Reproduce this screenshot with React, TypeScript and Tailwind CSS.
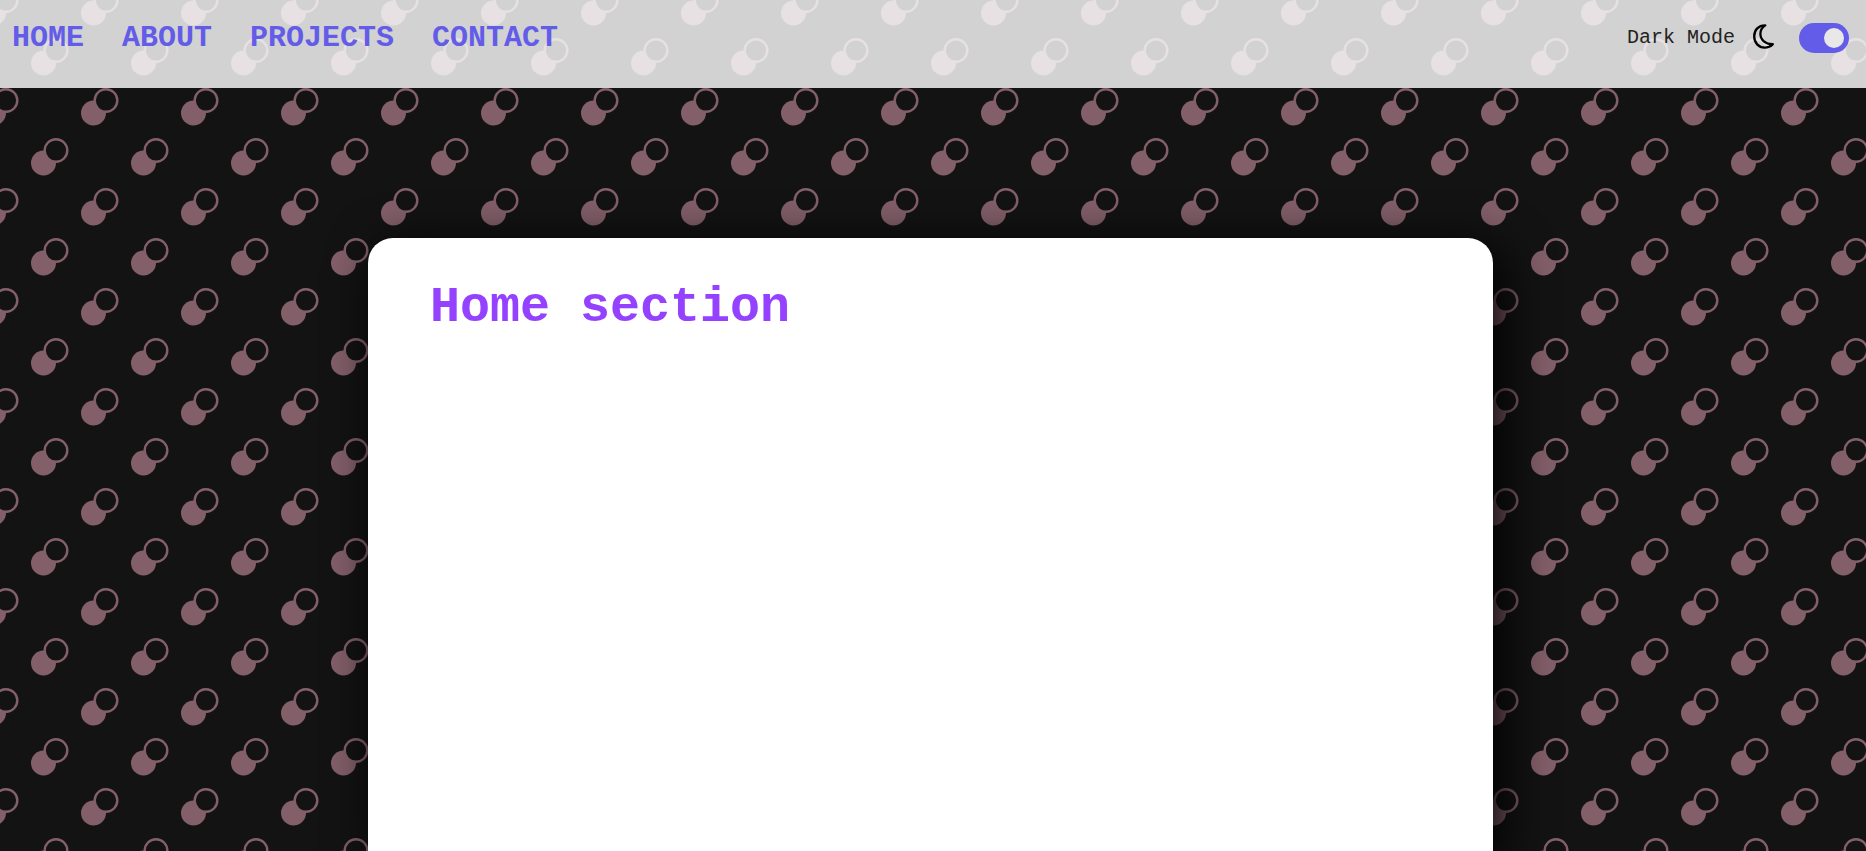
import { useState } from 'react';

const links = ['Home', 'About', 'Projects', 'Contact'];

function DotPattern() {
  return (
    <svg aria-hidden="true" className="absolute inset-0 -z-10 h-full w-full">
      <defs>
        <g id="dots">
          <circle cx="43.5" cy="63" r="12.5" fill="#835f6a" />
          <circle cx="56" cy="50.5" r="11.3" fill="#131313" stroke="#835f6a" strokeWidth="2.4" />
        </g>
        <pattern id="tile" width="100" height="100" patternUnits="userSpaceOnUse">
          <use href="#dots" />
          <use href="#dots" x="50" y="50" />
          <use href="#dots" x="-50" y="-50" />
          <use href="#dots" x="50" y="-50" />
          <use href="#dots" x="-50" y="50" />
        </pattern>
      </defs>
      <rect width="100%" height="100%" fill="#131313" />
      <rect width="100%" height="100%" fill="url(#tile)" />
    </svg>
  );
}

function MoonIcon() {
  return (
    <svg aria-hidden="true" viewBox="0 0 24 28" className="h-7 w-6" fill="none" stroke="#000" strokeWidth="2.3" strokeLinejoin="round">
      <path d="M14.3 1.4 C7.5 1.2 3.2 6 3.2 12.3 C3.2 18.8 7.6 23.6 13.6 23.6 C16.8 23.6 19.8 22.4 21.8 20.2 C14.5 20.4 9.4 16 9.4 9.8 C9.4 6.2 11.3 3.3 14.3 1.4 Z" />
    </svg>
  );
}

export default function App() {
  const [dark, setDark] = useState(true);
  return (
    <div className="relative isolate flex min-h-screen flex-col overflow-hidden font-['Courier_New','Liberation_Mono',monospace]">
      <DotPattern />
      <header className="flex h-22 items-start justify-between bg-white/81 pr-[17px] pl-3">
        <nav className="flex gap-[38px] pt-5 text-[30px] leading-9 font-bold text-[#635ce8] uppercase">
          {links.map((name) => (
            <a key={name} href={`#${name.toLowerCase()}`}>{name}</a>
          ))}
        </nav>
        <label className="flex items-center pt-5 text-xl leading-9 text-[#222]">
          <span>Dark Mode</span>
          <span className="mr-6 ml-4"><MoonIcon /></span>
          <input
            type="checkbox"
            role="switch"
            checked={dark}
            onChange={() => setDark(!dark)}
            className="h-[30px] w-[50px] cursor-pointer appearance-none rounded-full bg-gray-400 p-[5px] before:block before:size-5 before:rounded-full before:bg-[#e8e8e8] checked:bg-[#635ce8] checked:before:ml-5"
          />
        </label>
      </header>
      <main className="mt-[150px] mr-[373px] ml-[368px] flex-1 rounded-t-[25px] bg-white px-[62px] pt-10 shadow-[10px_10px_50px_#000]">
        <h1 className="text-[50px] leading-[60px] font-bold text-[#9442ff]">Home section</h1>
      </main>
    </div>
  );
}
